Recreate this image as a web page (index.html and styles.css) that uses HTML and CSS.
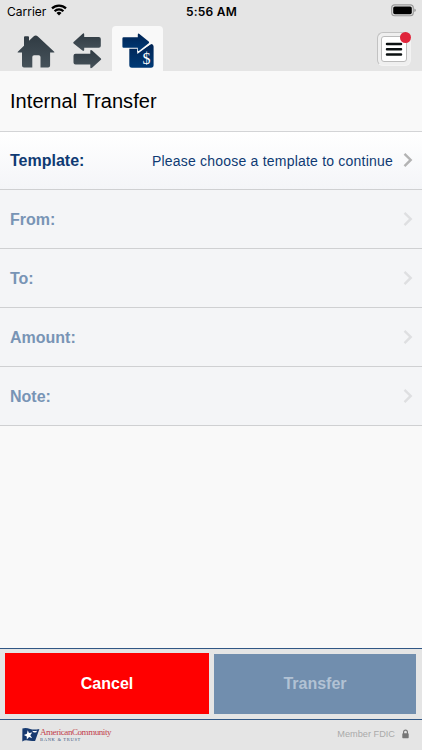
FILE: index.html
```html
<!DOCTYPE html>
<html lang="en">
<head>
<meta charset="utf-8">
<title>Internal Transfer</title>
<link rel="stylesheet" href="styles.css">
</head>
<body>
<div class="app">
  <header class="top">
    <div class="status">
      <div class="carrier"><span>Carrier</span>
        <svg class="wifi" width="16" height="12" viewBox="0 0 16 12"><g fill="none" stroke="#000" stroke-width="2.2"><path d="M1 4.4a10 10 0 0 1 14 0"/><path d="M3.6 7.2a6.2 6.2 0 0 1 8.8 0"/></g><path d="M8 11.4 5.5 8.9a3.6 3.6 0 0 1 5 0z"/></svg>
      </div>
      <div class="clock">5:56 AM</div>
      <svg class="battery" width="26" height="13" viewBox="0 0 26 13"><rect x="1.7" y=".9" width="21.6" height="10.8" rx="3" fill="#e5e5e5" stroke="#999" stroke-width="1.1"/><rect x="3.2" y="2.4" width="18.6" height="7.8" rx="1.6"/><path d="M24.5 4.6c1.5.5 1.5 2.9 0 3.4z" fill="#777"/></svg>
    </div>
    <nav class="nav">
      <a class="tab home"><svg width="38" height="35" viewBox="0 0 38 35"><defs><linearGradient id="slate" x1="0" y1="0" x2="0" y2="1"><stop offset="0" stop-color="#303b43"/><stop offset="1" stop-color="#46525a"/></linearGradient></defs><path fill="url(#slate)" d="M.8 18.7 7 12.8V4.2q0-1 1-1h3q1 0 1 1v3.5l4.5-4.2q2.2-2 4.4 0L37.2 18.7q.7.9-.5.9h-3.6v13q0 2-2 2h-7.6V24q0-1.8-1.8-1.8h-4.6q-1.8 0-1.8 1.8v10.6H7q-2 0-2-2v-13H1.3q-1.2 0-.5-.9z"/></svg></a>
      <a class="tab swap"><svg width="29" height="36" viewBox="0 0 29 36"><g fill="url(#slate)"><path d="M.6 9.1 9.4.9q1.8-1.3 1.8.6V4h14.6q2 0 2 2v7q0 1.7-2 1.7H11.2v2.1q0 1.9-1.8.7L.6 10.4q-.7-.6 0-1.3z"/><path d="M27.9 25.4 19.1 17.4q-1.8-1.2-1.8.7v2.7H2.5q-2 0-2 2v6.8q0 1.9 2 1.9h14.8v2.7q0 1.8 1.8.6l8.8-8.1q.7-.7 0-1.3z"/></g></svg></a>
      <a class="tab active"><svg width="33" height="36" viewBox="0 0 33 36"><defs><linearGradient id="navy" x1="0" y1="0" x2="0" y2="1"><stop offset="0" stop-color="#002454"/><stop offset="1" stop-color="#003a76"/></linearGradient></defs><path fill="url(#navy)" d="M7.3 15.8h8v3.6l14-8.4q2.3.3 2.3 2.5v18.6q0 2.6-2.6 2.6H9.9q-2.6 0-2.6-2.6z"/><path d="M28 10.6 16 19.6V14" fill="none" stroke="#f8f8f8" stroke-width="1.4"/><path fill="url(#navy)" d="M1.6 4.2h14.2V1.7q0-2 1.6-.8L26.7 8.6q.8.8 0 1.6l-9.5 7.5q-1.4 1-1.4-.8v-2.1H1.6q-1.2 0-1.2-1.2V5.4q0-1.2 1.2-1.2z"/><text x="20.6" y="30.7" class="dollar">$</text></svg></a>
      <button class="menu" aria-label="Menu"><svg width="26" height="26" viewBox="0 0 26 26"><rect x=".5" y=".5" width="25" height="25" rx="2.5" fill="#fff" stroke="#bbb"/><path d="M6 8h14M6 13.3h14M6 18.6h14" stroke="#0b1011" stroke-width="2.5" stroke-linecap="round"/></svg><i class="badge"></i></button>
    </nav>
  </header>
  <main class="content">
    <h1 class="title"><span>Internal Transfer</span></h1>
    <div class="row enabled"><b>Template:</b><span class="value">Please choose a template to continue</span><svg class="chev" width="10" height="16" viewBox="0 0 10 16"><path d="m1.5 1.8 6.2 6.1-6.2 6.2"/></svg></div>
    <div class="row"><b>From:</b><svg class="chev" width="10" height="16" viewBox="0 0 10 16"><path d="m1.5 1.8 6.2 6.1-6.2 6.2"/></svg></div>
    <div class="row"><b>To:</b><svg class="chev" width="10" height="16" viewBox="0 0 10 16"><path d="m1.5 1.8 6.2 6.1-6.2 6.2"/></svg></div>
    <div class="row"><b>Amount:</b><svg class="chev" width="10" height="16" viewBox="0 0 10 16"><path d="m1.5 1.8 6.2 6.1-6.2 6.2"/></svg></div>
    <div class="row"><b>Note:</b><svg class="chev" width="10" height="16" viewBox="0 0 10 16"><path d="m1.5 1.8 6.2 6.1-6.2 6.2"/></svg></div>
  </main>
  <div class="actions"><button class="cancel">Cancel</button><button class="transfer">Transfer</button></div>
  <footer class="footer">
    <div class="brand"><svg width="18" height="14" viewBox="0 0 18 14"><path fill="#173a70" d="M.4.5q3.8-1 7.8.6 4 1.1 9.2-.2l-4.3 12q-4 .5-7.1-.3-3-.8-5.7.9z"/><path fill="#fff" d="M5.7 2.2 7 5.1l3.2-.5L8.3 7.2l1.9 3-3.1-1.1-2.3 2.5V8.4L1.9 6.9l3-1.1zM10 2.8q2.6.5 4.9-.1l-.5 1.6q-1.6.3-3 0z"/></svg><div class="brand-text"><div class="brand-name">AmericanCommunity</div><div class="brand-sub">BANK &amp; TRUST</div></div></div>
    <div class="fdic"><span>Member FDIC</span><svg width="7" height="10" viewBox="0 0 7 10"><path d="M1.6 5V3a1.9 1.9 0 0 1 3.8 0v2" fill="none" stroke="#777" stroke-width="1.2"/><rect x=".3" y="4.3" width="6.4" height="5" rx=".7" fill="#777"/></svg></div>
  </footer>
</div>
</body>
</html>
```

FILE: styles.css
```css
* { box-sizing: border-box; }
body { margin: 0; font-family: "Liberation Sans", Arial, sans-serif; }
button { border: 0; padding: 0; font: inherit; }
svg { display: block; flex: none; }
.app { width: 422px; height: 750px; display: flex; flex-direction: column; background: #f9f9f9; overflow: hidden; }
.top { height: 71px; background: #e5e5e5; }
.status { height: 26px; display: grid; grid-template-columns: 1fr auto 1fr; padding: 0 6px 0 7px; font: 12px/23px Inter, sans-serif; }
.carrier { display: flex; }
.wifi { margin: 4px 0 0 5px; }
.clock { font-weight: 600; font-size: 12px; letter-spacing: .2px; }
.battery { justify-self: end; margin-top: 4px; }
.nav { height: 45px; display: flex; align-items: flex-start; padding-left: 17px; }
.home { margin-top: 7px; }
.swap { margin: 7px 0 0 18px; }
.active { margin-left: 10px; width: 51px; height: 45px; padding: 7px 0 0 10px; background: #f9f9f9; border-radius: 4px 4px 0 0; }
.dollar { font: 16px "Liberation Serif", serif; fill: #fff; }
.menu { position: relative; width: 34px; height: 34px; margin: 6px 11px 0 auto; padding: 3px; border: 1px solid #c2c2c2; border-right-color: #f3f3f3; border-bottom-color: #f3f3f3; border-radius: 6px; background: #efefef; }
.badge { position: absolute; right: -1px; top: -1px; width: 11px; height: 11px; border-radius: 50%; background: #e0243a; }
.content { flex: 1; }
.title { margin: 0; height: 61px; padding: 0 10px; font-size: 20px; font-weight: 400; line-height: 61px; letter-spacing: .06px; border-bottom: 1px solid #d3d4d6; }
.row { height: 59px; display: flex; align-items: center; padding: 2px 9px 0 10px; background: #f4f5f7; border-bottom: 1px solid #cfd0d2; color: #7894b5; font-size: 16px; }
.row.enabled { height: 58px; padding-top: 0; background: linear-gradient(#fff, #f4f5f8); color: #0f3a73; }
.value { margin-left: auto; font-size: 14px; letter-spacing: .21px; }
.chev { margin: -3px 0 0 auto; }
.chev path { fill: none; stroke: #dedfe1; stroke-width: 2.4; }
.enabled .chev { margin: -1px 0 0 10px; }
.enabled .chev path { stroke: #b3b3b3; }
.actions { height: 72px; display: grid; grid-template-columns: 204px 203px; gap: 4px; padding: 4px 5px 5px; background: #e5e5e5; border-top: 1px solid #315785; border-bottom: 1px solid #315785; }
.actions button { font-weight: 700; font-size: 16px; }
.cancel { background: #f00; color: #fff; }
.transfer { margin: 1px 0 0 1px; background: #718eae; color: #b2c2d4; }
.footer { height: 30px; display: flex; justify-content: space-between; padding: 8px 13px 0 22px; background: #e5e5e5; }
.brand { display: flex; height: 14px; }
.brand-text { font-family: "Liberation Serif", serif; white-space: nowrap; }
.brand-name { font-size: 9px; line-height: 9px; letter-spacing: -.44px; color: #c23f4c; }
.brand-sub { font-size: 4.5px; line-height: 5px; letter-spacing: .7px; color: #405782; }
.fdic { display: flex; gap: 7px; height: 12px; align-items: center; font-size: 9.2px; color: #aaa; }
```
